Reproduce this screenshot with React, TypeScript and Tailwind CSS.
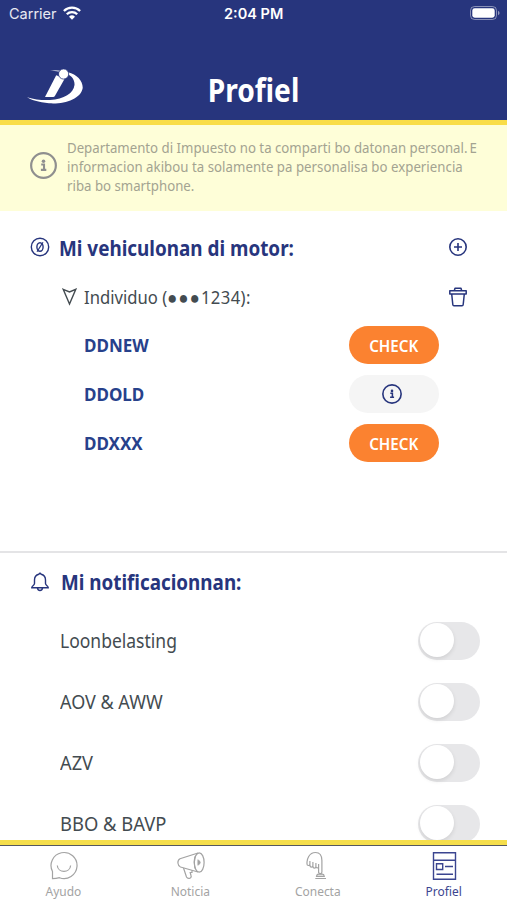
import { useState } from "react";
import clsx from "clsx";

const notifications = [
  { name: "Loonbelasting", width: "scale-x-[0.875]" },
  { name: "AOV & AWW", width: "scale-x-[0.9]" },
  { name: "AZV", width: "scale-x-[0.91]" },
  { name: "BBO & BAVP", width: "scale-x-[0.92]" },
];

const vehicles = [
  { plate: "DDNEW", checked: false },
  { plate: "DDOLD", checked: true },
  { plate: "DDXXX", checked: false },
];

function InfoIcon({ className }: { className?: string }) {
  return (
    <svg viewBox="0 0 26 26" className={className} fill="none" stroke="currentColor" strokeWidth="2.1">
      <circle cx="13" cy="13" r="11.9" />
      <circle cx="13" cy="9" r="1.7" fill="currentColor" stroke="none" />
      <path d="M10.800 12.100h2.700v5M10.500 17.200h5.200" strokeWidth="2" />
    </svg>
  );
}

function Logo() {
  return (
    <svg viewBox="0 0 56 36" className="h-9 w-14" fill="#fff">
      <path d="M23 2.800Q29 1 34 2.800L33 4.200Q28 2.200 23 2.800Z" fillOpacity=".6" />
      <path d="M41 4.200C50 6.200 56 13 55.700 20C54 31 37 36.500 22 35.300C12 34.500 3 31.500 0 29.300C8 31.800 16 32.400 23 32C37 31 46.500 25.500 47.500 17C47.800 12 45 8 40 6Z" />
      <path d="M29.200 7.200 37.800 10.500 28 27.800Q27.300 29 26.200 29H18Z" />
      <circle cx="36.600" cy="6" r="5.100" stroke="#27357d" strokeWidth=".8" />
    </svg>
  );
}

function StatusBar() {
  return (
    <div className="relative flex h-7 items-center justify-between pr-[7px] pl-[9px] font-[Inter,sans-serif] text-white">
      <div className="flex items-center gap-[6px]">
        <span className="text-[14.5px] text-white/90">Carrier</span>
        <svg viewBox="0 0 18 14" className="-mt-[2px] h-[14px] w-[18px]" fill="none" stroke="#fff" strokeWidth="2.3">
          <path d="M.9 5A11.500 11.500 0 0 1 17.100 5" />
          <path d="M3.800 8.200a7.400 7.400 0 0 1 10.400 0" />
          <path d="M9 13.800 6 10.700a4.300 4.300 0 0 1 6 0Z" fill="#fff" stroke="none" />
        </svg>
      </div>
      <span className="absolute left-[224px] text-[14.5px] font-semibold">2:04 PM</span>
      <svg viewBox="0 0 30 14" className="-mt-[2px] h-[14px] w-[30px]">
        <rect x=".5" y=".5" width="26" height="13" rx="4" fill="none" stroke="#fff" strokeOpacity=".45" />
        <rect x="2.300" y="2.300" width="22.400" height="9.400" rx="2.400" fill="#fff" />
        <path d="M28 4.800v4.400q1.600-.8 1.600-2.200T28 4.800Z" fill="#fff" fillOpacity=".5" />
      </svg>
    </div>
  );
}

function Toggle() {
  const [on, setOn] = useState(false);
  return (
    <button
      onClick={() => setOn(!on)}
      className={clsx(
        "flex h-[38px] w-[62px] items-center rounded-full px-[1.5px] pb-[1px]",
        on ? "justify-end bg-[#27357d]" : "bg-[#e7e7e9]"
      )}
    >
      <span className="size-[34px] rounded-full bg-white shadow-[0_2px_4px_rgba(0,0,0,0.1)]" />
    </button>
  );
}

const tabs = [
  {
    label: "Ayudo",
    icon: (
      <>
        <path d="M4.500 27.700V20.500A13 13 0 1 1 11.500 26.700Q8 27.600 4.500 27.700Z" />
        <path d="M9.300 14.500c.5 7.800 12.800 7.800 13.300 0" />
      </>
    ),
  },
  {
    label: "Noticia",
    icon: (
      <>
        <ellipse cx="24.200" cy="11.500" rx="4.900" ry="9.700" />
        <path d="M23 2 5 7.800Q2.700 9 2.900 12Q3.300 15.200 5.500 16L23 21M20 5.500Q18.500 11.500 20 17.500" />
        <path d="M22.800 8.700V14.300Q25.300 13.300 25.300 11.500T22.800 8.700Z" fill="currentColor" strokeWidth=".6" />
        <path d="M8.500 17 11.500 26Q12.500 28 15 27.200Q16.700 26.400 16 24.500L15.200 21.500H17V19.300" />
      </>
    ),
  },
  {
    label: "Conecta",
    icon: (
      <>
        <path d="M16.600 13V21.500Q17 22.600 18.300 22.600Q19.900 22.600 19.900 21V9.500Q19.900 1.500 13.500 1.500Q9 1.500 6.700 5.500Q5 8.500 5 11V13Q5 14.500 6.400 14.500Q7.900 14.500 7.900 13V10M7.900 13.500Q7.900 16.200 9.400 16.200Q10.900 16.200 10.900 14.500V11M10.900 15Q10.900 17.200 12.500 17.200Q13.900 17.200 13.900 15.500V12M13.900 15.500Q14.200 17.200 16.600 16.800" />
        <path d="M14.500 25.500Q15 22.700 17 23.200H20.500Q22 23.200 22.300 25.500ZM13.300 27.500H24" fill="currentColor" fillOpacity=".35" />
      </>
    ),
  },
  {
    label: "Profiel",
    icon: (
      <path
        d="M4.500 1.700H26.500V28.300H4.500ZM4.500 9.200H26.500M7.500 12.700H13.700V18.500H7.500ZM16 15.500H24M7.500 23.200H24"
        strokeWidth="1.400"
      />
    ),
  },
];

export default function App() {
  return (
    <div className="flex h-[900px] w-[507px] flex-col overflow-hidden bg-white font-['Noto_Sans',sans-serif] text-[#434b50]">
      <header className="h-[125px] shrink-0 border-b-[5px] border-[#f9dd49] bg-[#27357d]">
        <StatusBar />
        <div className="grid h-[92px] grid-cols-3 items-center pt-[30px]">
          <div className="-mt-[6px] pl-[27px]">
            <Logo />
          </div>
          <h1 className="mt-px scale-x-[0.88] text-center text-[32px] leading-[40px] font-bold text-white">Profiel</h1>
        </div>
      </header>

      <main className="min-h-0 flex-1 overflow-hidden">
        <div className="flex h-[86px] items-center bg-[#fefed8] pl-[30px] text-[#a3a391]">
          <InfoIcon className="mt-[-5px] size-[27px] shrink-0 text-[#8f8f8f]" />
          <p className="mt-[-4px] ml-[10px] origin-left scale-x-[0.945] text-[14px] leading-[19px] whitespace-nowrap">
            Departamento di Impuesto no ta comparti bo datonan personal.<span className="[word-spacing:-1.5px]"> E</span>
            <br />
            <span className="tracking-[0.03px]">informacion akibou ta solamente pa personalisa bo experiencia</span>
            <br />
            riba bo smartphone.
          </p>
        </div>

        <section className="h-[342px] border-b-2 border-[#e4e4e6] pt-[18px]">
          <div className="flex h-[36px] items-center pr-[39px] pl-[30px] text-[#27357d]">
            <svg viewBox="0 0 20 20" className="size-5 shrink-0" fill="none" stroke="currentColor" strokeWidth="1.4">
              <circle cx="10" cy="10" r="8.700" />
              <ellipse cx="10" cy="10" rx="3.100" ry="4.300" />
              <path d="m7 14.800 6-9.600" strokeWidth="1.200" />
            </svg>
            <h2 className="ml-[9px] origin-left scale-x-[0.858] text-[22px] leading-[30px] font-bold whitespace-nowrap">
              Mi vehiculonan di motor:
            </h2>
            <svg viewBox="0 0 20 20" className="ml-auto size-5 shrink-0" fill="none" stroke="currentColor" strokeWidth="1.6">
              <circle cx="10" cy="10" r="8.200" />
              <path d="M10 6v8M6 10h8" />
            </svg>
          </div>

          <div className="mt-[14px] flex h-[36px] items-center pr-[39px] pl-[62px]">
            <svg viewBox="0 0 15 18" className="h-[18px] w-[15px]" fill="none" stroke="currentColor" strokeWidth="1.4">
              <path d="M1.200 1.300 7.500 4 13.800 1.300 7.500 16Z" />
            </svg>
            <span className="ml-[7px] origin-left scale-x-[0.925] text-[18px] leading-[24px] whitespace-nowrap">
              Individuo (<span className="tracking-[1.3px]">●●●</span>
              <span className="tracking-[0.4px]">1234):</span>
            </span>
            <svg viewBox="0 0 20 20" className="ml-auto size-5" fill="none" stroke="#27357d" strokeWidth="1.5" strokeLinejoin="round">
              <path d="M6.300 3.700 7 1.200H13L13.700 3.700M1.800 3.700H18.200V7H1.800ZM3.700 7 4.800 17.500Q4.900 18.700 6 18.700H14Q15.100 18.700 15.200 17.500L16.300 7" />
            </svg>
          </div>

          <ul className="mt-[6px]">
            {vehicles.map((v) => (
              <li key={v.plate} className="flex h-[49px] items-center justify-between pr-[68px] pl-[84px]">
                <span className="-mt-px origin-left scale-x-[0.945] text-[18px] leading-[24px] font-bold text-[#27418b]">
                  {v.plate}
                </span>
                {v.checked ? (
                  <button className="-mt-px flex h-[38px] w-[90px] items-center justify-center rounded-full bg-[#f5f5f5] pr-[4px]">
                    <InfoIcon className="size-5 text-[#27357d]" />
                  </button>
                ) : (
                  <button className="-mt-px flex h-[38px] w-[90px] items-center justify-center rounded-full bg-[#fb8230] pt-[2px] text-white">
                    <span className="scale-x-[0.92] text-[16.5px] font-semibold">CHECK</span>
                  </button>
                )}
              </li>
            ))}
          </ul>
        </section>

        <section>
          <div className="flex h-[57px] items-center pl-[30px] text-[#27357d]">
            <svg viewBox="0 0 20 20" className="size-5 shrink-0" fill="none" stroke="currentColor" strokeWidth="1.4" strokeLinejoin="round">
              <path d="M8.800 2.300Q10 .2 11.200 2.300C14.300 3 15.500 5.500 15.500 8V11.500C15.500 13.500 18.500 14 18.300 15.800H1.700C1.500 14 4.500 13.500 4.500 11.500V8C4.500 5.500 5.700 3 8.800 2.300ZM7.300 15.800Q8 18.500 10 18.500T12.700 15.800" />
            </svg>
            <h2 className="mt-[-2px] ml-[11px] origin-left scale-x-[0.856] text-[22px] leading-[30px] font-bold whitespace-nowrap">
              Mi notificacionnan:
            </h2>
          </div>
          {notifications.map((n) => (
            <div key={n.name} className="flex h-[61px] items-center justify-between pr-[27px] pl-[60px]">
              <span className={clsx("origin-left text-[20px] leading-[28px] whitespace-nowrap", n.width)}>{n.name}</span>
              <Toggle />
            </div>
          ))}
        </section>
      </main>

      <nav className="grid h-[60px] shrink-0 grid-cols-4 border-t-[5px] border-[#f5de4b] text-[#a3a3a3]">
        {tabs.map((tab) => (
          <a
            key={tab.label}
            className={clsx(
              "flex flex-col items-center border-t border-[#55585f] pt-[5px]",
              tab.label === "Profiel" && "text-[#3b4590]"
            )}
          >
            <svg viewBox="0 0 30 30" className="size-[30px]" fill="none" stroke="currentColor" strokeWidth="1.2">
              {tab.icon}
            </svg>
            <span className="scale-x-[0.92] pl-px text-[13px] leading-[20px]">{tab.label}</span>
          </a>
        ))}
      </nav>
    </div>
  );
}
